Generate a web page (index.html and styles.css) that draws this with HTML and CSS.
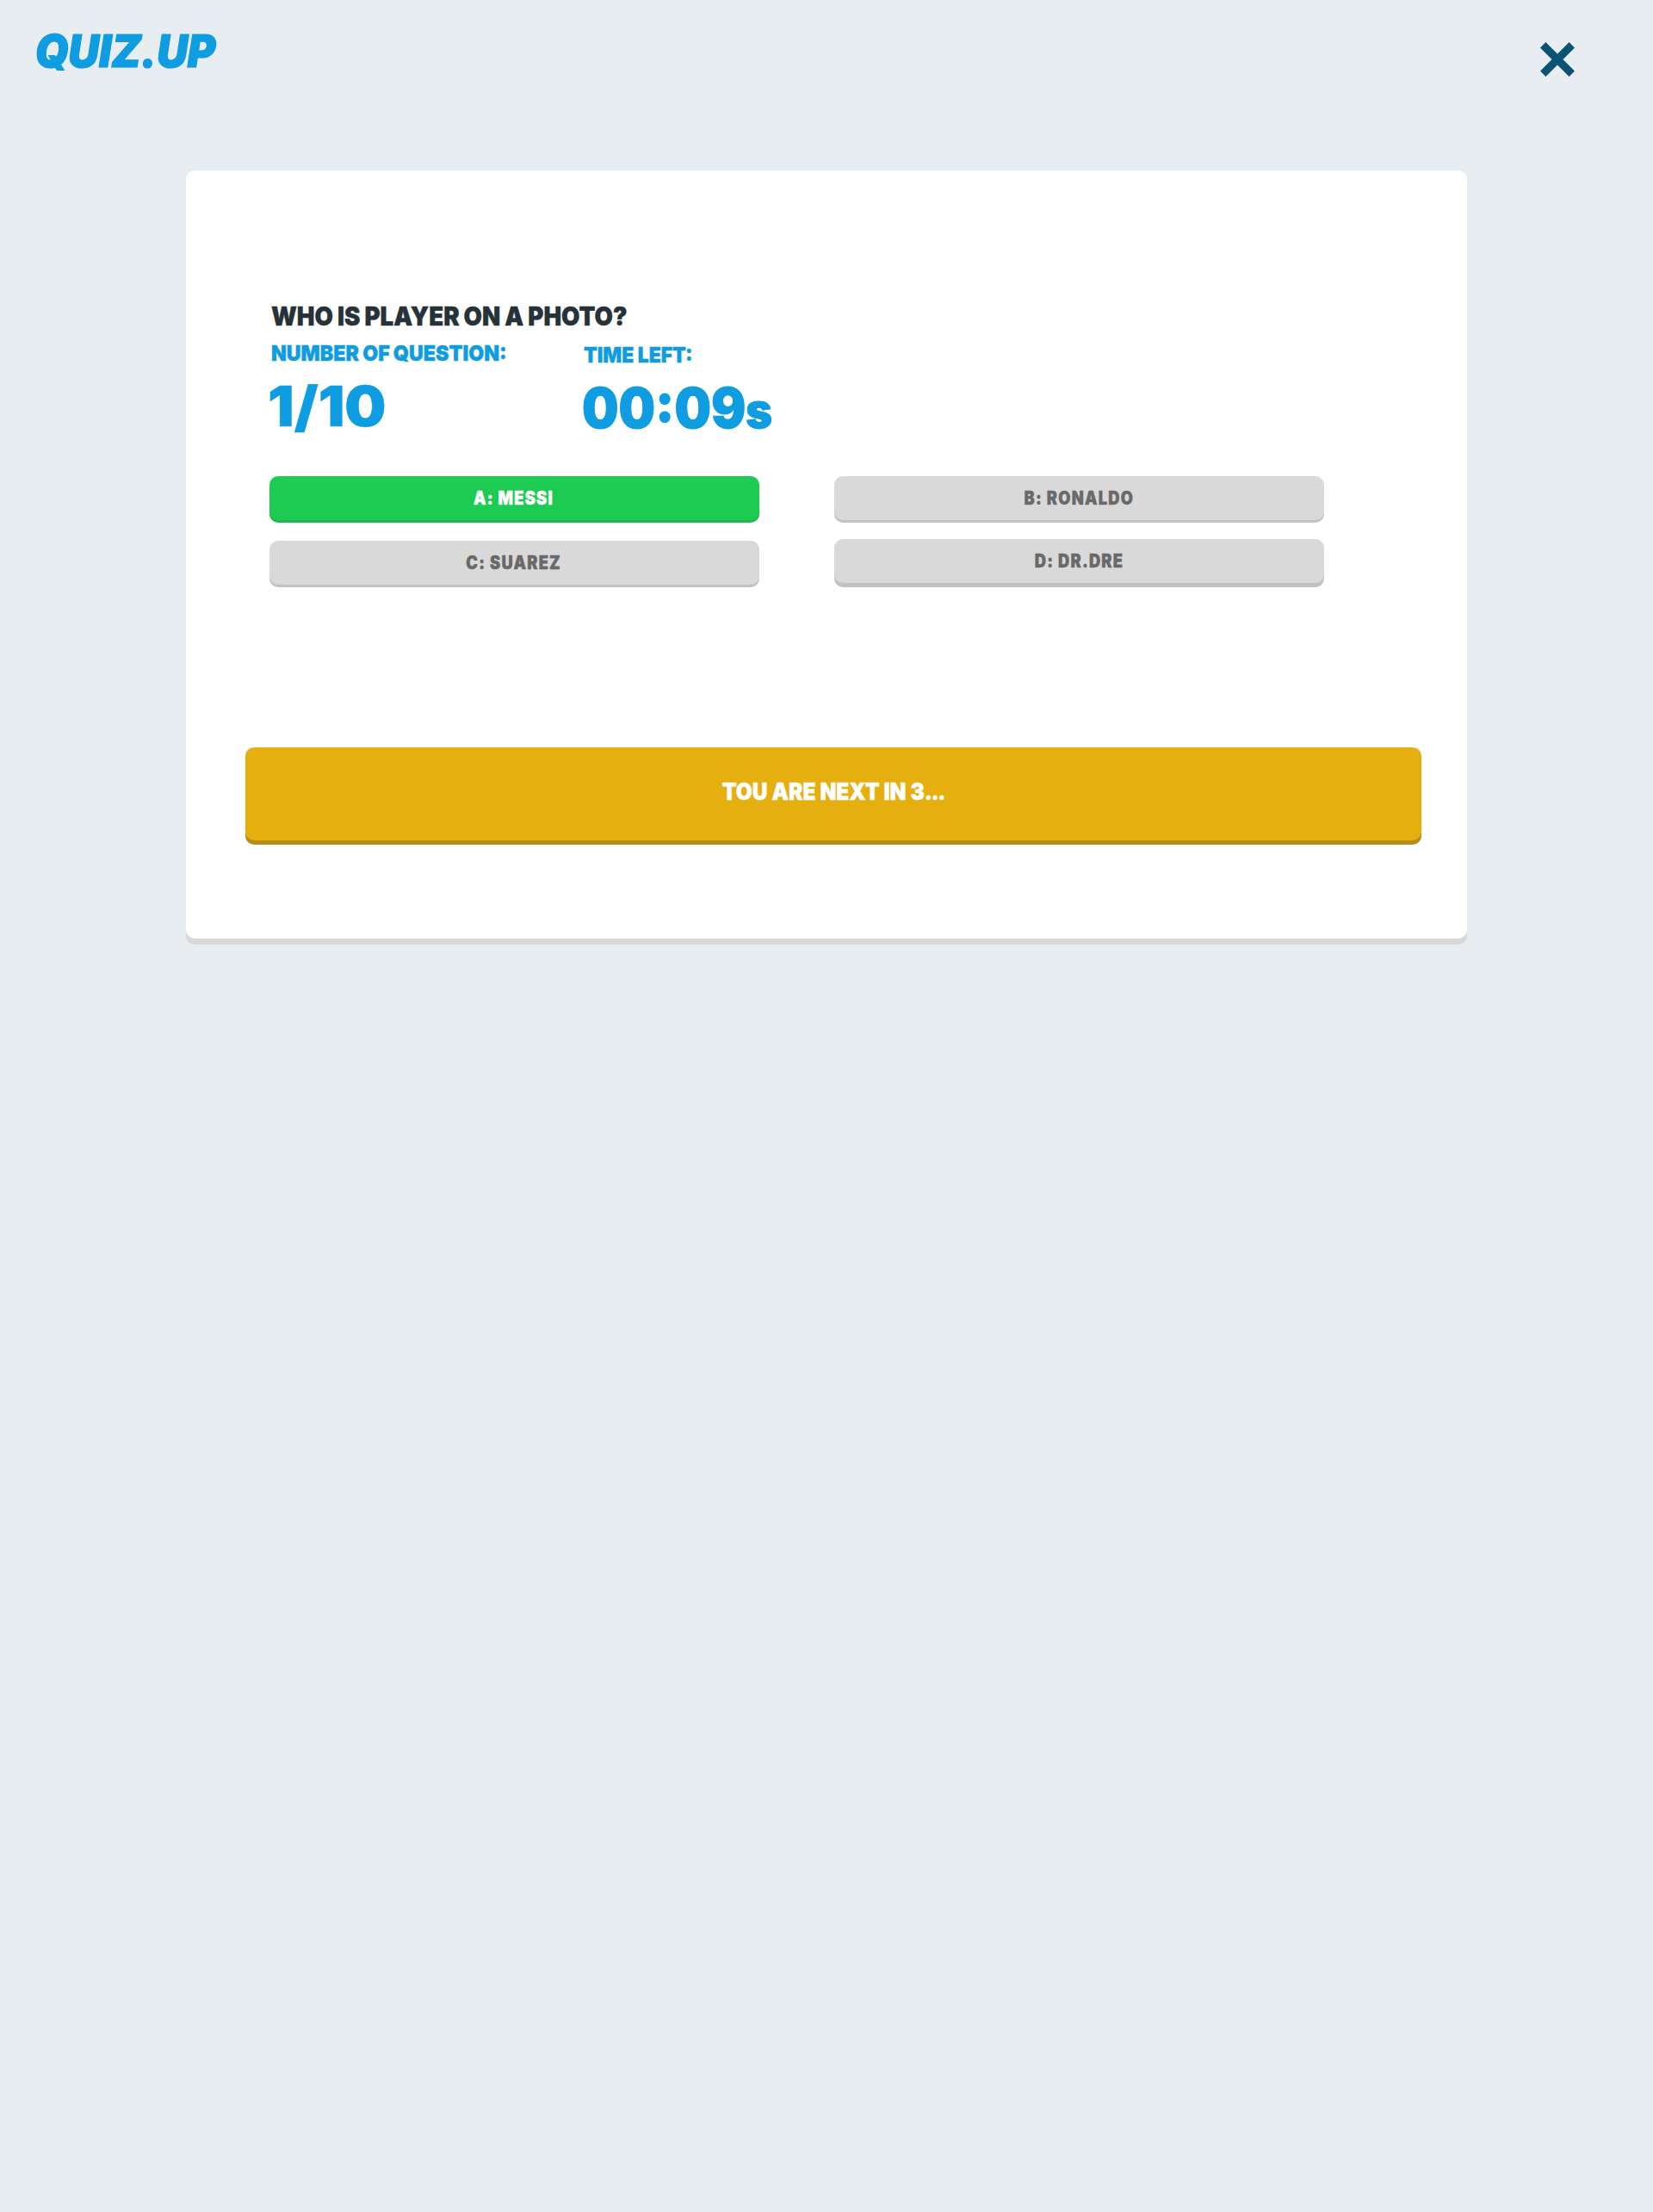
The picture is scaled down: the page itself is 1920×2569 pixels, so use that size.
FILE: index.html
```
<!DOCTYPE html>
<html lang="en">
<head>
<meta charset="utf-8">
<title>Quiz.Up</title>
<link rel="stylesheet" href="styles.css">
</head>
<body>
<header class="topbar">
  <a class="logo"><span>QUIZ.UP</span></a>
  <button class="close" aria-label="Close"><svg width="42" height="42" viewBox="0 0 42 42"><path d="M4.2 4.2 37.8 37.8M37.8 4.2 4.2 37.8" stroke="#0b5374" stroke-width="9" fill="none"/></svg></button>
</header>
<main class="card">
  <h1 class="question"><span>WHO IS PLAYER ON A PHOTO?</span></h1>
  <div class="stats">
    <div class="stat">
      <div class="label label-number"><span>NUMBER OF QUESTION:</span></div>
      <div class="value value-number"><span>1/10</span></div>
    </div>
    <div class="stat stat-time">
      <div class="label label-time"><span>TIME LEFT:</span></div>
      <div class="value value-time"><span>00:09<small>s</small></span></div>
    </div>
  </div>
  <div class="answers">
    <button class="answer correct"><span>A: MESSI</span></button>
    <button class="answer"><span>B: RONALDO</span></button>
    <button class="answer"><span>C: SUAREZ</span></button>
    <button class="answer raised"><span>D: DR.DRE</span></button>
  </div>
  <div class="next"><span>TOU ARE NEXT IN 3<i>...</i></span></div>
</main>
</body>
</html>
```
FILE: styles.css
```
* { box-sizing: border-box; margin: 0; padding: 0; }
body { min-height: 2569px; background: #e7edf1; color: #0f9ce0; font-family: Inter, "Noto Sans", sans-serif; font-weight: 900; }
button { border: 0; background: none; font: inherit; color: inherit; }

/* Condensed display lettering */
.logo span, .question span, .label span, .value span, .answer span, .next span { display: inline-block; transform-origin: left center; -webkit-text-stroke: .4px currentColor; }

.topbar { height: 198px; display: flex; justify-content: space-between; align-items: flex-start; padding: 28px 90px 0 41px; }
.logo { font-size: 52px; line-height: 63px; font-style: italic; white-space: nowrap; }
.logo span { transform: scaleX(.95); -webkit-text-stroke: 1.2px currentColor; }
.close { width: 42px; height: 42px; margin-top: 20px; }
.close svg { display: block; }

.card { width: 1488px; height: 892px; margin: 0 auto; padding: 152px 53px 0 97px; background: #fff; border-radius: 10px; box-shadow: 0 7px 0 #d8d8d8; white-space: nowrap; }
.question { height: 34px; padding-left: 2px; font-size: 30px; line-height: 34px; color: #263238; font-weight: 900; }
.question span { transform: scaleX(.92); word-spacing: -.5px; }

.stats { display: grid; grid-template-columns: 364px 1fr; }
.stat { height: 169px; padding-top: 11px; }
.stat-time { padding-top: 13px; }
.label { font-size: 25px; line-height: 30px; padding-left: 1px; }
.label-number { padding-left: 2px; }
.label-number span { transform: scaleX(.928); word-spacing: -.5px; }
.label-time span { transform: scaleX(.915); }
.value { font-size: 64px; line-height: 93px; }
.value-number { margin-left: -2px; }
.value-number span { transform: scaleX(1.06); }
.value-time { margin-left: -1px; }
.value-time span { transform: scaleX(.935); -webkit-text-stroke: 1px currentColor; }
.value small { font-size: 56px; line-height: 1; }

.answers { display: grid; grid-template-columns: 569px 569px; column-gap: 87px; grid-auto-rows: 51px; row-gap: 24px; }
.answer { height: 51px; border-radius: 10px; background: #d9d9d9; box-shadow: 0 3px 0 #c2c2c2; color: #696969; font-size: 21px; line-height: 51px; letter-spacing: 1.4px; }
.answer span { transform: scaleX(.87); transform-origin: center; }
.answer:nth-child(odd) { padding-right: 2px; }
.correct { background: #1dcb52; box-shadow: 0 3px 0 #1bbb4b; color: #fff; }
.raised { margin-top: -2px; box-shadow: 0 5px 0 #c2c2c2; }

.next { width: 1366px; height: 108px; margin: 189px 0 0 -28px; border-radius: 10px; background: #e6af10; box-shadow: 0 5px 0 #b58d15; color: #fff; font-size: 27px; line-height: 103px; text-align: center; }
.next span { transform: scaleX(.91); transform-origin: center; }
.next i { font-style: normal; letter-spacing: -1.6px; }
```
